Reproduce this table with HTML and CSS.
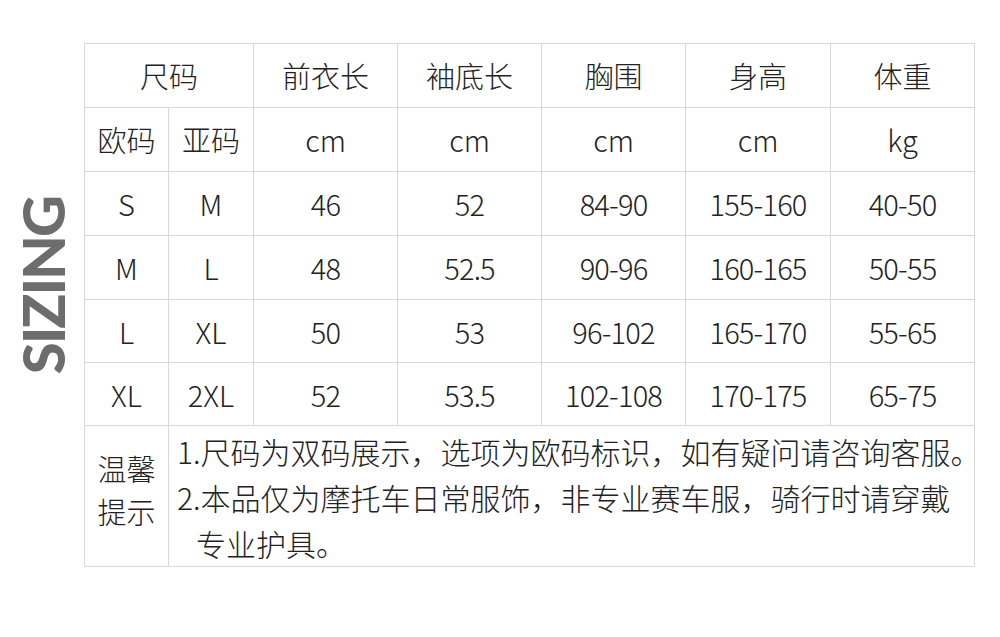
FILE: index.html
```html
<!DOCTYPE html>
<html lang="zh-CN">
<head>
<meta charset="utf-8">
<title>SIZING</title>
<link rel="stylesheet" href="styles.css">
</head>
<body>
<div class="page">
  <div class="side">
    <div class="sizing">SIZING</div>
  </div>
  <table class="chart">
    <colgroup>
      <col class="c-eu"><col class="c-as"><col class="c-num"><col class="c-num"><col class="c-num"><col class="c-num5"><col class="c-last">
    </colgroup>
    <tr class="r-head">
      <td colspan="2">尺码</td><td>前衣长</td><td>袖底长</td><td>胸围</td><td>身高</td><td>体重</td>
    </tr>
    <tr class="r-unit">
      <td>欧码</td><td>亚码</td><td>cm</td><td>cm</td><td>cm</td><td>cm</td><td>kg</td>
    </tr>
    <tr class="r-data">
      <td>S</td><td>M</td><td class="num">46</td><td class="num">52</td><td class="num">84-90</td><td class="num">155-160</td><td class="num">40-50</td>
    </tr>
    <tr class="r-data">
      <td>M</td><td>L</td><td class="num">48</td><td class="num">52.5</td><td class="num">90-96</td><td class="num">160-165</td><td class="num">50-55</td>
    </tr>
    <tr class="r-data r-short">
      <td>L</td><td>XL</td><td class="num">50</td><td class="num">53</td><td class="num">96-102</td><td class="num">165-170</td><td class="num">55-65</td>
    </tr>
    <tr class="r-data r-short">
      <td>XL</td><td>2XL</td><td class="num">52</td><td class="num">53.5</td><td class="num">102-108</td><td class="num">170-175</td><td class="num">65-75</td>
    </tr>
    <tr class="r-notes">
      <td class="tip-label">温馨<br>提示</td>
      <td class="tip-text" colspan="6">
        <p class="note">1.尺码为双码展示，选项为欧码标识，如有疑问请咨询客服。</p>
        <p class="note">2.本品仅为摩托车日常服饰，非专业赛车服，骑行时请穿戴<br>专业护具。</p>
      </td>
    </tr>
  </table>
</div>
</body>
</html>
```

FILE: styles.css
```css
html, body {
  margin: 0;
  padding: 0;
  background: #ffffff;
}

.page {
  display: flex;
  align-items: flex-start;
  padding-top: 43px;
  font-family: "Noto Sans CJK SC", "Noto Sans", sans-serif;
  font-weight: 300;
  color: #222222;
}

.side {
  width: 84px;
  flex: none;
  display: flex;
  justify-content: center;
  padding-left: 2px;
  box-sizing: border-box;
}

.sizing {
  margin-top: 154px;
  writing-mode: vertical-rl;
  transform: rotate(180deg);
  font-family: Lato, "Open Sans", sans-serif;
  font-weight: 900;
  font-size: 58px;
  line-height: 1;
  letter-spacing: -2px;
  color: #6d6d6d;
}

.chart {
  border-collapse: collapse;
  table-layout: fixed;
  width: 890px;
}

.c-eu { width: 84px; }
.c-as { width: 85px; }
.c-num { width: 144px; }
.c-num5 { width: 145px; }
.c-last { width: 144px; }

.chart td {
  border: 1px solid #d8d8d8;
  text-align: center;
  vertical-align: middle;
  padding: 0;
  font-size: 29px;
  line-height: 1.2;
}

.chart td.num {
  letter-spacing: -0.8px;
}

.r-head td, .r-unit td, .r-data td { height: 63px; }
.r-short td { height: 62px; }

.chart td.tip-label {
  vertical-align: top;
  line-height: 43px;
  padding-top: 21px;
}

.chart td.tip-text {
  vertical-align: top;
  text-align: left;
  padding: 2px 0 0 8px;
  height: 138px;
}

.note {
  margin: 0;
  font-size: 30px;
  line-height: 46px;
  white-space: nowrap;
  padding-left: 19px;
  text-indent: -19px;
}
```
